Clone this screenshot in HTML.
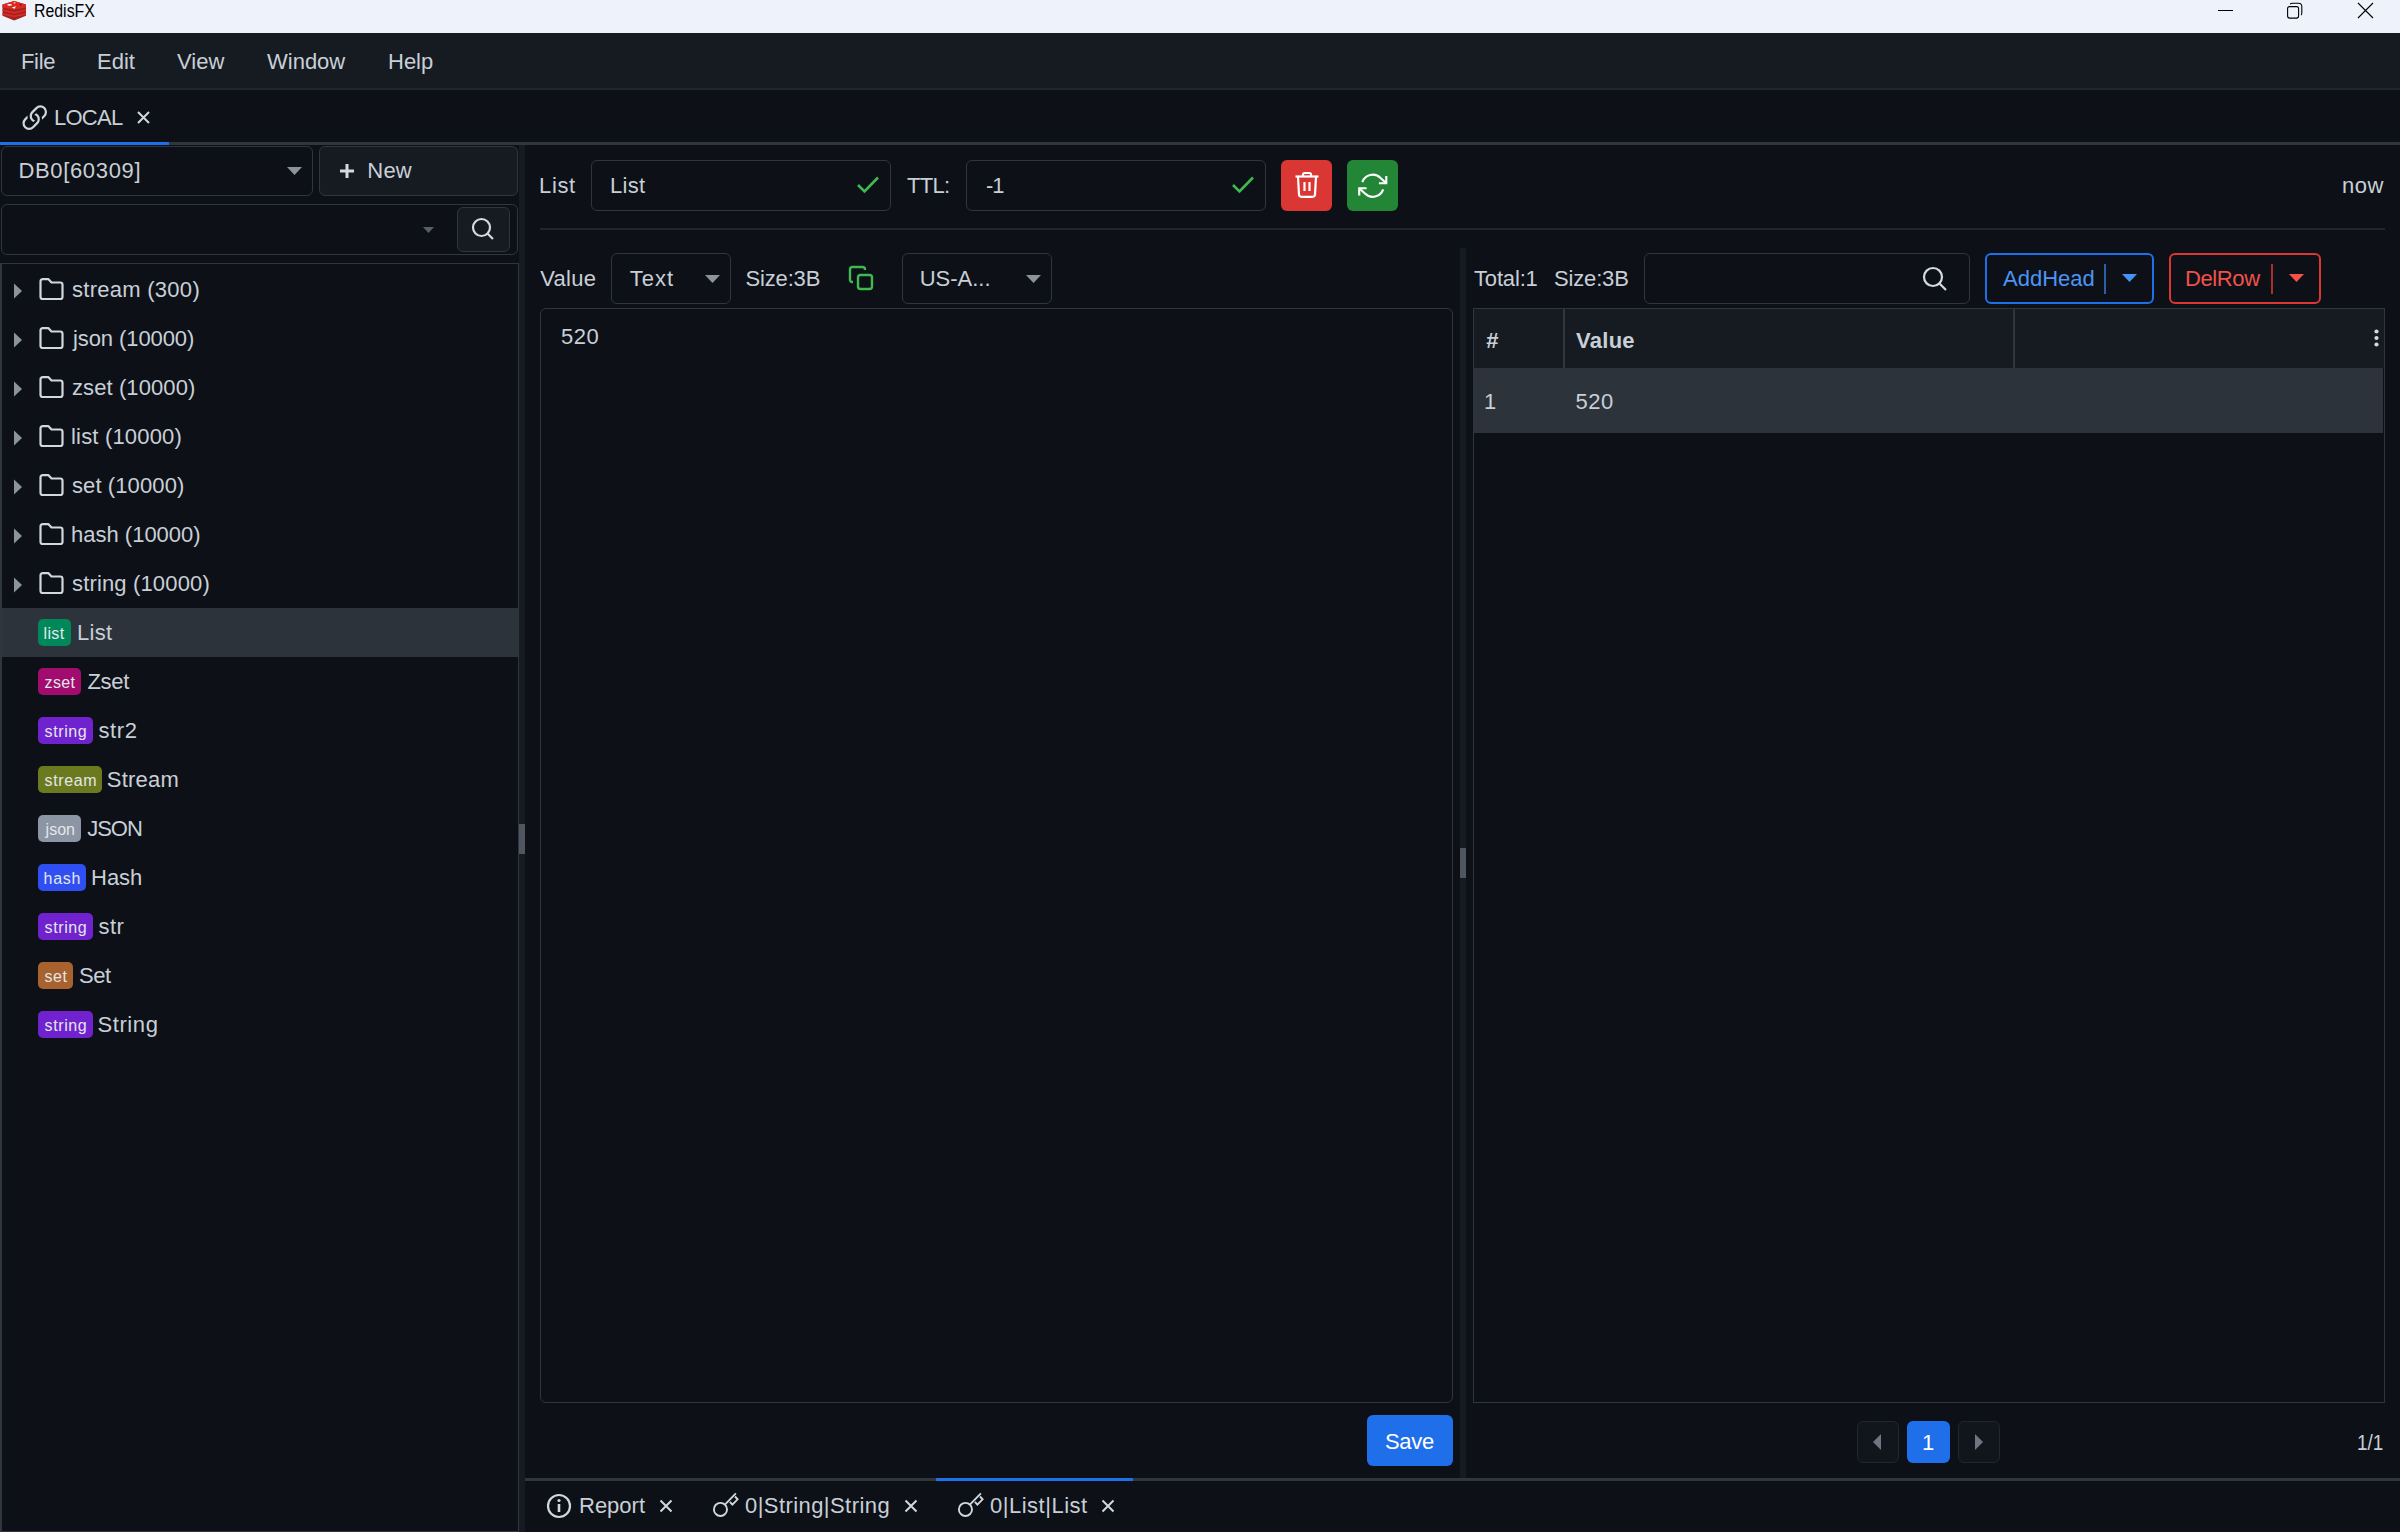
<!DOCTYPE html>
<html><head><meta charset="utf-8">
<style>
*{margin:0;padding:0;box-sizing:border-box}
html,body{width:2400px;height:1532px;overflow:hidden;background:#0d1117;font-family:"Liberation Sans",sans-serif;color:#dde3ea}
.a{position:absolute}
.t{position:absolute;white-space:nowrap}
.bx{position:absolute;border:1px solid #30363d;border-radius:6px}
</style></head><body>
<!-- title bar -->
<div class="a" style="left:0;top:0;width:2400px;height:33px;background:#eef2fa"></div>
<svg class="a" style="left:0;top:0" width="30" height="24" viewBox="0 0 30 24">
  <path d="M2.5 4.6 L14.2 1 L26 4.6 L26 15.8 L14.2 20.6 L2.5 15.8Z" fill="#a81f1f"/>
  <path d="M2.5 4.6 L14.2 1 L26 4.6 L26 7.4 L14.2 9.7 L2.5 7.4Z" fill="#d92a22"/>
  <polyline points="2.5,10.1 14.2,12.9 26,10.1" fill="none" stroke="#d32d28" stroke-width="1.8"/>
  <polyline points="2.5,13.8 14.2,16.4 26,13.8" fill="none" stroke="#d32d28" stroke-width="1.8"/>
  <ellipse cx="9.6" cy="4.8" rx="2.4" ry="0.9" fill="#fff"/>
  <path d="M13 2.2 L16 2.4 L14.8 3.8Z" fill="#fde"/>
  <path d="M11.8 7.6 L15.9 6.2 L14.6 8.7Z" fill="#fff"/>
  <circle cx="20.6" cy="4.8" r="0.9" fill="#7a1212"/>
</svg>
<div class="a" style="left:2218px;top:10px;width:15px;height:1px;background:#000"></div>
<svg class="a" style="left:2285px;top:1px" width="20" height="20" viewBox="0 0 20 20"><rect x="2.6" y="5.6" width="11" height="11.5" rx="2" fill="none" stroke="#000" stroke-width="1.1"/><path d="M5.2 3.2 Q5.6 2.2 7.6 2.2 H13.5 Q16.8 2.2 16.8 5.5 V11.5 Q16.8 13.6 16 14" fill="none" stroke="#000" stroke-width="1.1"/></svg>
<svg class="a" style="left:2357px;top:2px" width="17" height="17" viewBox="0 0 17 17"><path d="M1 1 L16 16 M16 1 L1 16" stroke="#000" stroke-width="1.1"/></svg>
<!-- menu -->
<div class="a" style="left:0;top:33px;width:2400px;height:57px;background:#161b22;border-bottom:2px solid #21262d"></div>
<!-- tab LOCAL -->
<svg class="a" style="left:16.7px;top:100.8px" width="35.5" height="35.5" viewBox="0 0 16 16"><g fill="#d0d7de"><path d="M4.715 6.542 3.343 7.914a3 3 0 1 0 4.243 4.243l1.828-1.829A3 3 0 0 0 8.586 5.5L8 6.086a1 1 0 0 0-.154.199 2 2 0 0 1 .861 3.337L6.88 11.45a2 2 0 1 1-2.83-2.83l.793-.792a4 4 0 0 1-.128-1.287z"/><path d="M6.586 4.672A3 3 0 0 0 7.414 9.5l.775-.776a2 2 0 0 1-.896-3.346L9.12 3.55a2 2 0 1 1 2.83 2.83l-.793.792c.112.42.155.855.128 1.287l1.372-1.372a3 3 0 1 0-4.243-4.243z"/></g></svg>
<svg class="a" style="left:137px;top:111px" width="13" height="13" viewBox="0 0 13 13"><path d="M1 1 L12 12 M12 1 L1 12" stroke="#d0d7de" stroke-width="2"/></svg>
<div class="a" style="left:0;top:142px;width:2400px;height:3px;background:#30363d"></div>
<div class="a" style="left:0;top:142px;width:169px;height:3px;background:#1f6feb"></div>

<!-- left panel -->
<div class="bx" style="left:1px;top:146px;width:312px;height:50px"></div>
<svg class="a" style="left:286px;top:166px" width="17" height="10" viewBox="0 0 17 10"><path d="M1 1 H16 L8.5 9Z" fill="#8b949e"/></svg>
<div class="bx" style="left:319px;top:146px;width:199px;height:50px;background:#161b22"></div>
<svg class="a" style="left:339px;top:163px" width="16" height="16" viewBox="0 0 16 16"><path d="M8 1 V15 M1 8 H15" stroke="#d3dae2" stroke-width="3"/></svg>
<div class="bx" style="left:1px;top:204px;width:517px;height:51px"></div>
<svg class="a" style="left:422px;top:226px" width="13" height="8" viewBox="0 0 13 8"><path d="M1 1 H12 L6.5 7Z" fill="#575e67"/></svg>
<div class="bx" style="left:457px;top:207px;width:53px;height:45px;background:#161b22"></div>
<svg class="a" style="left:470px;top:216px" width="26" height="26" viewBox="0 0 26 26"><circle cx="11.5" cy="11.5" r="8.5" fill="none" stroke="#d3dae2" stroke-width="2.2"/><path d="M17.5 17.5 L23 23" stroke="#d3dae2" stroke-width="2.2"/></svg>
<div class="a" style="left:0;top:263px;width:519px;height:1269px;border:1px solid #30363d;border-left:2px solid #30363d"></div>
<div class="a" style="left:519px;top:145px;width:6px;height:1387px;background:#161b22"></div>
<div class="a" style="left:519px;top:824px;width:6px;height:30px;background:#4f565f"></div>
<svg class="a" style="left:13px;top:283px" width="10" height="16" viewBox="0 0 10 16"><path d="M1 0.5 L9 8 L1 15.5Z" fill="#8b949e"/></svg>
<svg class="a" style="left:38px;top:277px" width="27" height="24" viewBox="0 0 27 24"><path d="M2.5 4.5 Q2.5 2.2 4.8 2.2 H10.5 L13.5 5.5 H22.2 Q24.5 5.5 24.5 7.8 V19.7 Q24.5 22 22.2 22 H4.8 Q2.5 22 2.5 19.7Z" fill="none" stroke="#d0d7de" stroke-width="2.2" stroke-linejoin="round"/></svg>
<svg class="a" style="left:13px;top:332px" width="10" height="16" viewBox="0 0 10 16"><path d="M1 0.5 L9 8 L1 15.5Z" fill="#8b949e"/></svg>
<svg class="a" style="left:38px;top:326px" width="27" height="24" viewBox="0 0 27 24"><path d="M2.5 4.5 Q2.5 2.2 4.8 2.2 H10.5 L13.5 5.5 H22.2 Q24.5 5.5 24.5 7.8 V19.7 Q24.5 22 22.2 22 H4.8 Q2.5 22 2.5 19.7Z" fill="none" stroke="#d0d7de" stroke-width="2.2" stroke-linejoin="round"/></svg>
<svg class="a" style="left:13px;top:381px" width="10" height="16" viewBox="0 0 10 16"><path d="M1 0.5 L9 8 L1 15.5Z" fill="#8b949e"/></svg>
<svg class="a" style="left:38px;top:375px" width="27" height="24" viewBox="0 0 27 24"><path d="M2.5 4.5 Q2.5 2.2 4.8 2.2 H10.5 L13.5 5.5 H22.2 Q24.5 5.5 24.5 7.8 V19.7 Q24.5 22 22.2 22 H4.8 Q2.5 22 2.5 19.7Z" fill="none" stroke="#d0d7de" stroke-width="2.2" stroke-linejoin="round"/></svg>
<svg class="a" style="left:13px;top:430px" width="10" height="16" viewBox="0 0 10 16"><path d="M1 0.5 L9 8 L1 15.5Z" fill="#8b949e"/></svg>
<svg class="a" style="left:38px;top:424px" width="27" height="24" viewBox="0 0 27 24"><path d="M2.5 4.5 Q2.5 2.2 4.8 2.2 H10.5 L13.5 5.5 H22.2 Q24.5 5.5 24.5 7.8 V19.7 Q24.5 22 22.2 22 H4.8 Q2.5 22 2.5 19.7Z" fill="none" stroke="#d0d7de" stroke-width="2.2" stroke-linejoin="round"/></svg>
<svg class="a" style="left:13px;top:479px" width="10" height="16" viewBox="0 0 10 16"><path d="M1 0.5 L9 8 L1 15.5Z" fill="#8b949e"/></svg>
<svg class="a" style="left:38px;top:473px" width="27" height="24" viewBox="0 0 27 24"><path d="M2.5 4.5 Q2.5 2.2 4.8 2.2 H10.5 L13.5 5.5 H22.2 Q24.5 5.5 24.5 7.8 V19.7 Q24.5 22 22.2 22 H4.8 Q2.5 22 2.5 19.7Z" fill="none" stroke="#d0d7de" stroke-width="2.2" stroke-linejoin="round"/></svg>
<svg class="a" style="left:13px;top:528px" width="10" height="16" viewBox="0 0 10 16"><path d="M1 0.5 L9 8 L1 15.5Z" fill="#8b949e"/></svg>
<svg class="a" style="left:38px;top:522px" width="27" height="24" viewBox="0 0 27 24"><path d="M2.5 4.5 Q2.5 2.2 4.8 2.2 H10.5 L13.5 5.5 H22.2 Q24.5 5.5 24.5 7.8 V19.7 Q24.5 22 22.2 22 H4.8 Q2.5 22 2.5 19.7Z" fill="none" stroke="#d0d7de" stroke-width="2.2" stroke-linejoin="round"/></svg>
<svg class="a" style="left:13px;top:577px" width="10" height="16" viewBox="0 0 10 16"><path d="M1 0.5 L9 8 L1 15.5Z" fill="#8b949e"/></svg>
<svg class="a" style="left:38px;top:571px" width="27" height="24" viewBox="0 0 27 24"><path d="M2.5 4.5 Q2.5 2.2 4.8 2.2 H10.5 L13.5 5.5 H22.2 Q24.5 5.5 24.5 7.8 V19.7 Q24.5 22 22.2 22 H4.8 Q2.5 22 2.5 19.7Z" fill="none" stroke="#d0d7de" stroke-width="2.2" stroke-linejoin="round"/></svg>
<div class="a" style="left:2px;top:608px;width:516px;height:49px;background:#2d333b"></div>
<div class="a" style="left:38px;top:619px;width:33.0px;height:27px;background:#00875a;border-radius:5px"></div>
<div class="a" style="left:38px;top:668px;width:43.4px;height:27px;background:#a20c6f;border-radius:5px"></div>
<div class="a" style="left:38px;top:717px;width:54.5px;height:27px;background:#7122cf;border-radius:5px"></div>
<div class="a" style="left:38px;top:766px;width:63.6px;height:27px;background:#6b7a1e;border-radius:5px"></div>
<div class="a" style="left:38px;top:815px;width:42.5px;height:27px;background:#8b95a3;border-radius:5px"></div>
<div class="a" style="left:38px;top:864px;width:47.5px;height:27px;background:#2f4ff2;border-radius:5px"></div>
<div class="a" style="left:38px;top:913px;width:54.5px;height:27px;background:#7122cf;border-radius:5px"></div>
<div class="a" style="left:38px;top:962px;width:34.9px;height:27px;background:#a8622d;border-radius:5px"></div>
<div class="a" style="left:38px;top:1011px;width:54.5px;height:27px;background:#7122cf;border-radius:5px"></div>

<!-- right top -->
<div class="bx" style="left:591px;top:160px;width:300px;height:51px"></div>
<svg class="a" style="left:856px;top:175px" width="24" height="19" viewBox="0 0 24 19"><path d="M2 10 L8.5 16.5 L22 2.5" fill="none" stroke="#3fb950" stroke-width="2.6"/></svg>
<div class="bx" style="left:966px;top:160px;width:300px;height:51px"></div>
<svg class="a" style="left:1231px;top:175px" width="24" height="19" viewBox="0 0 24 19"><path d="M2 10 L8.5 16.5 L22 2.5" fill="none" stroke="#3fb950" stroke-width="2.6"/></svg>
<div class="a" style="left:1281px;top:160px;width:51px;height:51px;background:#da3633;border-radius:6px"></div>
<svg class="a" style="left:1294px;top:171px" width="26" height="28" viewBox="0 0 26 28"><g fill="none" stroke="#fff" stroke-width="2.2" stroke-linejoin="round"><path d="M1.5 5.5 H24.5"/><path d="M9 5 V3.5 Q9 2 10.5 2 H15.5 Q17 2 17 3.5 V5"/><path d="M4 6 L5 23.5 Q5.2 25.8 7.5 25.8 H18.5 Q20.8 25.8 21 23.5 L22 6"/><path d="M10.5 11 V20 M15.5 11 V20"/></g></svg>
<div class="a" style="left:1347px;top:160px;width:51px;height:51px;background:#238636;border-radius:6px"></div>
<svg class="a" style="left:1358px;top:170.6px" width="29.5" height="29.5" viewBox="0 0 24 24"><g fill="none" stroke="#fff" stroke-width="1.75" stroke-linecap="butt" stroke-linejoin="miter"><polyline points="23 4 23 10 17 10"/><polyline points="1 20 1 14 7 14"/><path d="M3.51 9a9 9 0 0 1 14.85-3.36L23 10M1 14l4.64 4.36A9 9 0 0 0 20.49 15"/></g></svg>
<div class="a" style="left:540px;top:228px;width:1845px;height:2px;background:#21262d"></div>

<!-- value panel -->
<div class="bx" style="left:611px;top:253px;width:120px;height:51px"></div>
<svg class="a" style="left:704px;top:274px" width="17" height="10" viewBox="0 0 17 10"><path d="M1 1 H16 L8.5 9Z" fill="#8b949e"/></svg>
<svg class="a" style="left:848px;top:265px" width="27" height="27" viewBox="0 0 27 27"><g fill="none" stroke="#3fb950" stroke-width="2.4" stroke-linejoin="round"><rect x="10" y="10" width="14" height="14" rx="2.5"/><path d="M5 17 H4.5 Q2 17 2 14.5 V4.5 Q2 2 4.5 2 H14.5 Q17 2 17 4.5 V5"/></g></svg>
<div class="bx" style="left:902px;top:253px;width:150px;height:51px"></div>
<svg class="a" style="left:1025px;top:274px" width="17" height="10" viewBox="0 0 17 10"><path d="M1 1 H16 L8.5 9Z" fill="#8b949e"/></svg>
<div class="bx" style="left:540px;top:308px;width:913px;height:1095px"></div>
<div class="a" style="left:1367px;top:1415px;width:86px;height:51px;background:#1f6feb;border-radius:6px"></div>

<!-- divider between panels -->
<div class="a" style="left:1460px;top:248px;width:6px;height:1230px;background:#161b22"></div>
<div class="a" style="left:1460px;top:848px;width:6px;height:30px;background:#4f565f"></div>

<!-- table panel -->
<div class="bx" style="left:1644px;top:253px;width:326px;height:51px"></div>
<svg class="a" style="left:1921px;top:265px" width="27" height="27" viewBox="0 0 27 27"><circle cx="12" cy="12" r="9" fill="none" stroke="#d3dae2" stroke-width="2.2"/><path d="M18.5 18.5 L25 25" stroke="#d3dae2" stroke-width="2.2"/></svg>
<div class="a" style="left:1985px;top:253px;width:169px;height:51px;border:2px solid #1f6feb;border-radius:6px"></div>
<div class="a" style="left:2104px;top:264px;width:2px;height:30px;background:#2b5fa8"></div>
<svg class="a" style="left:2121px;top:273px" width="17" height="10" viewBox="0 0 17 10"><path d="M1 1 H16 L8.5 9Z" fill="#4493f8"/></svg>
<div class="a" style="left:2169px;top:253px;width:152px;height:51px;border:2px solid #da3633;border-radius:6px"></div>
<div class="a" style="left:2271px;top:264px;width:2px;height:30px;background:#a8302d"></div>
<svg class="a" style="left:2288px;top:273px" width="17" height="10" viewBox="0 0 17 10"><path d="M1 1 H16 L8.5 9Z" fill="#f85149"/></svg>

<div class="a" style="left:1473px;top:308px;width:912px;height:1095px;border:1px solid #30363d"></div>
<div class="a" style="left:1474px;top:309px;width:910px;height:59px;background:#161b22"></div>
<div class="a" style="left:1563px;top:309px;width:2px;height:59px;background:#30363d"></div>
<div class="a" style="left:2013px;top:309px;width:2px;height:59px;background:#30363d"></div>
<svg class="a" style="left:2372px;top:327px" width="8" height="22" viewBox="0 0 8 22"><circle cx="4.5" cy="4.5" r="2.1" fill="#d3dae2"/><circle cx="4.5" cy="11" r="2.1" fill="#d3dae2"/><circle cx="4.5" cy="17.5" r="2.1" fill="#d3dae2"/></svg>
<div class="a" style="left:1474px;top:368px;width:909px;height:65px;background:#2d333b"></div>

<!-- pagination -->
<div class="a" style="left:1857px;top:1421px;width:42px;height:42px;background:#11151c;border:1px solid #22272e;border-radius:6px"></div>
<svg class="a" style="left:1872px;top:1433px" width="10" height="18" viewBox="0 0 10 18"><path d="M9 1 L1 9 L9 17Z" fill="#6e7681"/></svg>
<div class="a" style="left:1907px;top:1421px;width:43px;height:42px;background:#1f6feb;border-radius:6px"></div>
<div class="a" style="left:1958px;top:1421px;width:42px;height:42px;background:#11151c;border:1px solid #22272e;border-radius:6px"></div>
<svg class="a" style="left:1974px;top:1433px" width="10" height="18" viewBox="0 0 10 18"><path d="M1 1 L9 9 L1 17Z" fill="#6e7681"/></svg>

<!-- bottom tabs -->
<div class="a" style="left:525px;top:1478px;width:1875px;height:3px;background:#30363d"></div>
<div class="a" style="left:936px;top:1478px;width:197px;height:3px;background:#1f6feb"></div>
<svg class="a" style="left:546px;top:1493px" width="26" height="26" viewBox="0 0 26 26"><circle cx="13" cy="13" r="11" fill="none" stroke="#d0d7de" stroke-width="2.2"/><path d="M13 11 V19" stroke="#d0d7de" stroke-width="2.6"/><circle cx="13" cy="7.5" r="1.6" fill="#d0d7de"/></svg>
<svg class="a" style="left:659px;top:1499px" width="14" height="14" viewBox="0 0 14 14"><path d="M1.5 1.5 L12.5 12.5 M12.5 1.5 L1.5 12.5" stroke="#d0d7de" stroke-width="2"/></svg>
<svg class="a" style="left:708px;top:1488px" width="36" height="36" viewBox="0 0 36 36"><g fill="none" stroke="#d0d7de" stroke-width="1.9" stroke-linejoin="miter"><circle cx="12.46" cy="21.4" r="6.55"/><path d="M17.1 16.3 L27.9 5.3"/><path d="M21.9 13.9 L24.4 16.7 L29.6 11.3 L27 8.5"/></g></svg>
<svg class="a" style="left:904px;top:1499px" width="14" height="14" viewBox="0 0 14 14"><path d="M1.5 1.5 L12.5 12.5 M12.5 1.5 L1.5 12.5" stroke="#d0d7de" stroke-width="2"/></svg>
<svg class="a" style="left:953px;top:1488px" width="36" height="36" viewBox="0 0 36 36"><g fill="none" stroke="#d0d7de" stroke-width="1.9" stroke-linejoin="miter"><circle cx="12.46" cy="21.4" r="6.55"/><path d="M17.1 16.3 L27.9 5.3"/><path d="M21.9 13.9 L24.4 16.7 L29.6 11.3 L27 8.5"/></g></svg>
<svg class="a" style="left:1101px;top:1499px" width="14" height="14" viewBox="0 0 14 14"><path d="M1.5 1.5 L12.5 12.5 M12.5 1.5 L1.5 12.5" stroke="#d0d7de" stroke-width="2"/></svg>
<div class="t" id="t0" style="left:34.00px;top:2.01px;font-size:18px;line-height:18px;color:#000;font-weight:normal;letter-spacing:0.000px;transform-origin:0 0;transform:scaleX(0.882);">RedisFX</div>
<div class="t" id="t1" style="left:21.00px;top:51.00px;font-size:22px;line-height:22px;color:#c8cfd7;font-weight:normal;letter-spacing:-0.333px;">File</div>
<div class="t" id="t2" style="left:97.00px;top:51.00px;font-size:22px;line-height:22px;color:#c8cfd7;font-weight:normal;letter-spacing:0.000px;">Edit</div>
<div class="t" id="t3" style="left:177.00px;top:51.00px;font-size:22px;line-height:22px;color:#c8cfd7;font-weight:normal;letter-spacing:0.000px;">View</div>
<div class="t" id="t4" style="left:267.00px;top:51.00px;font-size:22px;line-height:22px;color:#c8cfd7;font-weight:normal;letter-spacing:0.000px;">Window</div>
<div class="t" id="t5" style="left:388.00px;top:51.00px;font-size:22px;line-height:22px;color:#c8cfd7;font-weight:normal;letter-spacing:0.000px;">Help</div>
<div class="t" id="t6" style="left:54.00px;top:107.00px;font-size:22px;line-height:22px;color:#c8cfd7;font-weight:normal;letter-spacing:-0.750px;">LOCAL</div>
<div class="t" id="t7" style="left:18.40px;top:160.00px;font-size:22px;line-height:22px;color:#c8cfd7;font-weight:normal;letter-spacing:0.667px;">DB0[60309]</div>
<div class="t" id="t8" style="left:367.25px;top:160.00px;font-size:22px;line-height:22px;color:#c8cfd7;font-weight:normal;letter-spacing:0.250px;">New</div>
<div class="t" id="t9" style="left:72.00px;top:279.00px;font-size:22px;line-height:22px;color:#c8cfd7;font-weight:normal;letter-spacing:0.273px;">stream (300)</div>
<div class="t" id="t10" style="left:73.00px;top:328.00px;font-size:22px;line-height:22px;color:#c8cfd7;font-weight:normal;letter-spacing:-0.091px;">json (10000)</div>
<div class="t" id="t11" style="left:72.00px;top:377.00px;font-size:22px;line-height:22px;color:#c8cfd7;font-weight:normal;letter-spacing:0.091px;">zset (10000)</div>
<div class="t" id="t12" style="left:71.00px;top:426.00px;font-size:22px;line-height:22px;color:#c8cfd7;font-weight:normal;letter-spacing:0.182px;">list (10000)</div>
<div class="t" id="t13" style="left:72.00px;top:475.00px;font-size:22px;line-height:22px;color:#c8cfd7;font-weight:normal;letter-spacing:0.100px;">set (10000)</div>
<div class="t" id="t14" style="left:71.00px;top:524.00px;font-size:22px;line-height:22px;color:#c8cfd7;font-weight:normal;letter-spacing:0.000px;">hash (10000)</div>
<div class="t" id="t15" style="left:72.00px;top:573.00px;font-size:22px;line-height:22px;color:#c8cfd7;font-weight:normal;letter-spacing:0.154px;">string (10000)</div>
<div class="t" id="t16" style="left:43.60px;top:626.00px;font-size:16px;line-height:16px;color:#e3e7ec;font-weight:normal;letter-spacing:0.333px;">list</div>
<div class="t" id="t17" style="left:77.00px;top:622.00px;font-size:22px;line-height:22px;color:#c8cfd7;font-weight:normal;letter-spacing:0.333px;">List</div>
<div class="t" id="t18" style="left:44.60px;top:675.00px;font-size:16px;line-height:16px;color:#e3e7ec;font-weight:normal;letter-spacing:0.333px;">zset</div>
<div class="t" id="t19" style="left:87.50px;top:671.00px;font-size:22px;line-height:22px;color:#c8cfd7;font-weight:normal;letter-spacing:-0.333px;">Zset</div>
<div class="t" id="t20" style="left:44.60px;top:724.00px;font-size:16px;line-height:16px;color:#e3e7ec;font-weight:normal;letter-spacing:0.600px;">string</div>
<div class="t" id="t21" style="left:98.40px;top:720.00px;font-size:22px;line-height:22px;color:#c8cfd7;font-weight:normal;letter-spacing:0.667px;">str2</div>
<div class="t" id="t22" style="left:44.60px;top:773.00px;font-size:16px;line-height:16px;color:#e3e7ec;font-weight:normal;letter-spacing:0.600px;">stream</div>
<div class="t" id="t23" style="left:106.80px;top:769.00px;font-size:22px;line-height:22px;color:#c8cfd7;font-weight:normal;letter-spacing:0.200px;">Stream</div>
<div class="t" id="t24" style="left:45.60px;top:822.00px;font-size:16px;line-height:16px;color:#e3e7ec;font-weight:normal;letter-spacing:-0.000px;">json</div>
<div class="t" id="t25" style="left:87.20px;top:818.00px;font-size:22px;line-height:22px;color:#c8cfd7;font-weight:normal;letter-spacing:-1.000px;">JSON</div>
<div class="t" id="t26" style="left:43.60px;top:871.00px;font-size:16px;line-height:16px;color:#e3e7ec;font-weight:normal;letter-spacing:0.667px;">hash</div>
<div class="t" id="t27" style="left:91.00px;top:867.00px;font-size:22px;line-height:22px;color:#c8cfd7;font-weight:normal;letter-spacing:0.000px;">Hash</div>
<div class="t" id="t28" style="left:44.60px;top:920.00px;font-size:16px;line-height:16px;color:#e3e7ec;font-weight:normal;letter-spacing:0.600px;">string</div>
<div class="t" id="t29" style="left:98.40px;top:916.00px;font-size:22px;line-height:22px;color:#c8cfd7;font-weight:normal;letter-spacing:0.500px;">str</div>
<div class="t" id="t30" style="left:44.60px;top:969.00px;font-size:16px;line-height:16px;color:#e3e7ec;font-weight:normal;letter-spacing:0.500px;">set</div>
<div class="t" id="t31" style="left:79.00px;top:965.00px;font-size:22px;line-height:22px;color:#c8cfd7;font-weight:normal;letter-spacing:-0.500px;">Set</div>
<div class="t" id="t32" style="left:44.60px;top:1018.00px;font-size:16px;line-height:16px;color:#e3e7ec;font-weight:normal;letter-spacing:0.600px;">string</div>
<div class="t" id="t33" style="left:97.40px;top:1014.00px;font-size:22px;line-height:22px;color:#c8cfd7;font-weight:normal;letter-spacing:0.600px;">String</div>
<div class="t" id="t34" style="left:539.00px;top:175.00px;font-size:22px;line-height:22px;color:#c8cfd7;font-weight:normal;letter-spacing:0.667px;">List</div>
<div class="t" id="t35" style="left:610.00px;top:175.00px;font-size:22px;line-height:22px;color:#c8cfd7;font-weight:normal;letter-spacing:0.333px;">List</div>
<div class="t" id="t36" style="left:907.00px;top:175.00px;font-size:22px;line-height:22px;color:#c8cfd7;font-weight:normal;letter-spacing:-0.667px;">TTL:</div>
<div class="t" id="t37" style="left:986.00px;top:175.00px;font-size:22px;line-height:22px;color:#c8cfd7;font-weight:normal;letter-spacing:-1.000px;">-1</div>
<div class="t" id="t38" style="left:2342.00px;top:175.00px;font-size:22px;line-height:22px;color:#c8cfd7;font-weight:normal;letter-spacing:0.500px;">now</div>
<div class="t" id="t39" style="left:540.30px;top:268.00px;font-size:22px;line-height:22px;color:#c8cfd7;font-weight:normal;letter-spacing:0.250px;">Value</div>
<div class="t" id="t40" style="left:629.70px;top:268.00px;font-size:22px;line-height:22px;color:#c8cfd7;font-weight:normal;letter-spacing:1.000px;">Text</div>
<div class="t" id="t41" style="left:745.50px;top:268.00px;font-size:22px;line-height:22px;color:#c8cfd7;font-weight:normal;letter-spacing:-0.167px;">Size:3B</div>
<div class="t" id="t42" style="left:919.70px;top:268.00px;font-size:22px;line-height:22px;color:#c8cfd7;font-weight:normal;letter-spacing:-0.000px;">US-A...</div>
<div class="t" id="t43" style="left:561.00px;top:326.00px;font-size:22px;line-height:22px;color:#c8cfd7;font-weight:normal;letter-spacing:0.500px;">520</div>
<div class="t" id="t44" style="left:1385.00px;top:1431.00px;font-size:22px;line-height:22px;color:#ffffff;font-weight:normal;letter-spacing:-0.333px;">Save</div>
<div class="t" id="t45" style="left:1474.00px;top:268.00px;font-size:22px;line-height:22px;color:#c8cfd7;font-weight:normal;letter-spacing:-0.167px;">Total:1</div>
<div class="t" id="t46" style="left:1554.00px;top:268.00px;font-size:22px;line-height:22px;color:#c8cfd7;font-weight:normal;letter-spacing:-0.167px;">Size:3B</div>
<div class="t" id="t47" style="left:2003.00px;top:268.00px;font-size:22px;line-height:22px;color:#4c94f5;font-weight:normal;letter-spacing:0.000px;">AddHead</div>
<div class="t" id="t48" style="left:2185.00px;top:268.00px;font-size:22px;line-height:22px;color:#f0514a;font-weight:normal;letter-spacing:-0.400px;">DelRow</div>
<div class="t" id="t49" style="left:1486.25px;top:330.00px;font-size:22px;line-height:22px;color:#c8cfd7;font-weight:bold;letter-spacing:0.000px;">#</div>
<div class="t" id="t50" style="left:1576.10px;top:330.00px;font-size:22px;line-height:22px;color:#c8cfd7;font-weight:bold;letter-spacing:0.250px;">Value</div>
<div class="t" id="t51" style="left:1484.10px;top:391.00px;font-size:22px;line-height:22px;color:#c8cfd7;font-weight:normal;letter-spacing:0.000px;">1</div>
<div class="t" id="t52" style="left:1575.50px;top:391.00px;font-size:22px;line-height:22px;color:#c8cfd7;font-weight:normal;letter-spacing:0.500px;">520</div>
<div class="t" id="t53" style="left:1922.00px;top:1432.00px;font-size:22px;line-height:22px;color:#ffffff;font-weight:normal;letter-spacing:0.000px;">1</div>
<div class="t" id="t54" style="left:2357.00px;top:1432.00px;font-size:22px;line-height:22px;color:#c8cfd7;font-weight:normal;letter-spacing:0.000px;transform-origin:0 0;transform:scaleX(0.86);">1/1</div>
<div class="t" id="t55" style="left:579.00px;top:1495.00px;font-size:22px;line-height:22px;color:#c8cfd7;font-weight:normal;letter-spacing:0.000px;">Report</div>
<div class="t" id="t56" style="left:745.00px;top:1495.00px;font-size:22px;line-height:22px;color:#c8cfd7;font-weight:normal;letter-spacing:0.429px;">0|String|String</div>
<div class="t" id="t57" style="left:990.00px;top:1495.00px;font-size:22px;line-height:22px;color:#c8cfd7;font-weight:normal;letter-spacing:0.500px;">0|List|List</div>
</body></html>
